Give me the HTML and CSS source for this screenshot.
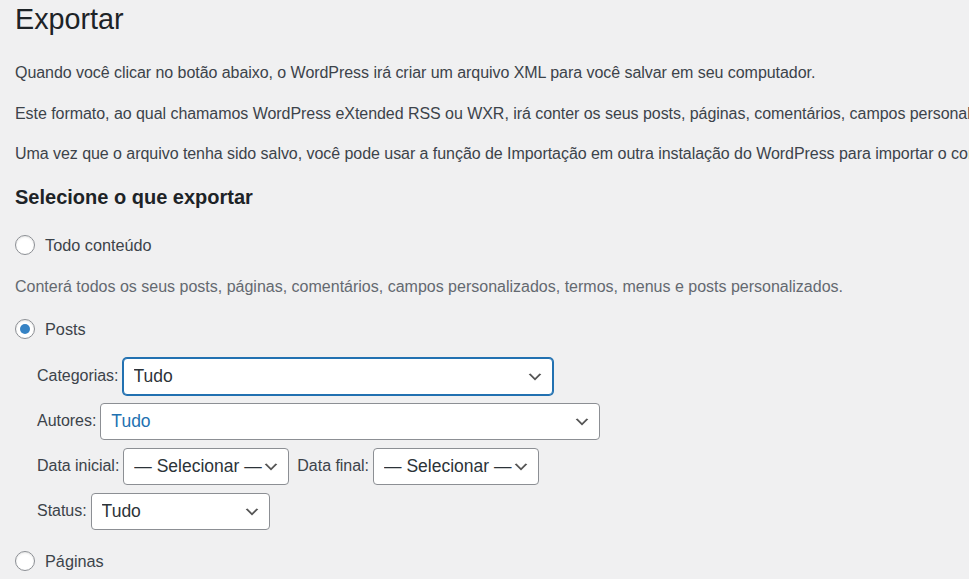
FILE: index.html
```html
<!DOCTYPE html>
<html lang="pt-BR">
<head>
<meta charset="utf-8">
<title>Exportar</title>
<link rel="stylesheet" href="styles.css">
</head>
<body>
<div class="wrap">
  <h1 class="title">Exportar</h1>
  <p class="para">Quando você clicar no botão abaixo, o WordPress irá criar um arquivo XML para você salvar em seu computador.</p>
  <p class="para">Este formato, ao qual chamamos WordPress eXtended RSS ou WXR, irá conter os seus posts, páginas, comentários, campos personalizados, categorias e tags.</p>
  <p class="para">Uma vez que o arquivo tenha sido salvo, você pode usar a função de Importação em outra instalação do WordPress para importar o conteúdo deste site.</p>
  <h2 class="subtitle">Selecione o que exportar</h2>
  <fieldset class="choices">
    <p class="choice choice-first"><label class="radio-label"><input class="radio" type="radio" name="content" value="all"> Todo conteúdo</label></p>
    <p class="description">Conterá todos os seus posts, páginas, comentários, campos personalizados, termos, menus e posts personalizados.</p>
    <p class="choice choice-posts"><label class="radio-label"><input class="radio" type="radio" name="content" value="posts" checked> Posts</label></p>
    <ul class="filters">
      <li class="filter">
        <label class="filter-label" for="cat">Categorias:</label>
        <select id="cat" class="select select-focus select-cat"><option>Tudo</option></select>
      </li>
      <li class="filter">
        <label class="filter-label" for="aut">Autores:</label>
        <select id="aut" class="select select-hover select-aut"><option>Tudo</option></select>
      </li>
      <li class="filter">
        <label class="filter-label" for="ini">Data inicial:</label>
        <select id="ini" class="select select-date"><option>— Selecionar —</option></select>
        <label class="filter-label label-gap" for="fin">Data final:</label>
        <select id="fin" class="select select-date"><option>— Selecionar —</option></select>
      </li>
      <li class="filter">
        <label class="filter-label" for="st">Status:</label>
        <select id="st" class="select select-status"><option>Tudo</option></select>
      </li>
    </ul>
    <p class="choice choice-last"><label class="radio-label"><input class="radio" type="radio" name="content" value="pages"> Páginas</label></p>
  </fieldset>
</div>
</body>
</html>
```

FILE: styles.css
```css
html, body {
  margin: 0;
  padding: 0;
  background: #f0f0f1;
}
body {
  font-family: "Liberation Sans", Arial, sans-serif;
  color: #3c434a;
  font-size: 16.25px;
  line-height: 1.5;
  overflow: hidden;
  width: 969px;
  height: 579px;
}
.wrap {
  padding: 0 0 0 15px;
  white-space: nowrap;
}
.title {
  margin: 0;
  padding: 1px 0 0;
  font-size: 28.75px;
  font-weight: 400;
  line-height: 37px;
  color: #1d2327;
}
.para {
  margin: 0;
  padding-top: 16px;
  line-height: 24.5px;
  font-size: 16px;
  letter-spacing: -0.05px;
}
.title + .para {
  padding-top: 23px;
}
.subtitle {
  margin: 0;
  padding-top: 17px;
  font-size: 20px;
  font-weight: 600;
  line-height: 26px;
  color: #1d2327;
}
.choices {
  margin: 0;
  padding: 0;
  border: 0;
}
.choice {
  margin: 0;
  line-height: 24px;
}
.choice-first {
  padding-top: 23px;
}
.description {
  margin: 0;
  padding-top: 14px;
  line-height: 24px;
  color: #646970;
  font-size: 16px;
}
.choice-posts {
  padding-top: 17px;
}
.radio-label {
  display: inline-flex;
  align-items: center;
}
.radio {
  appearance: none;
  -webkit-appearance: none;
  width: 20px;
  height: 20px;
  margin: 0 10px 0 0;
  border: 1px solid #8c8f94;
  border-radius: 50%;
  background: #fff;
  box-sizing: border-box;
  display: inline-flex;
  align-items: center;
  justify-content: center;
  box-shadow: inset 0 1px 2px rgba(0,0,0,0.1);
}
.radio:checked::before {
  content: "";
  width: 10px;
  height: 10px;
  border-radius: 50%;
  background: #3582c4;
}
.filters {
  list-style: none;
  margin: 0;
  padding: 17px 0 0 22px;
}
.filter {
  display: flex;
  align-items: center;
  height: 37px;
  margin-bottom: 8px;
}
.filter:last-child {
  margin-bottom: 0;
}
.choice-last {
  padding-top: 19px;
}
.filter-label {
  margin-right: 4px;
  font-size: 16px;
  letter-spacing: -0.03px;
}
.label-gap {
  margin-left: 8px;
}
.select {
  appearance: none;
  -webkit-appearance: none;
  box-sizing: border-box;
  height: 37px;
  font-family: inherit;
  font-size: 17.5px;
  line-height: 35px;
  color: #2c3338;
  border: 1px solid #8c8f94;
  border-radius: 4px;
  padding: 0 30px 0 10px;
  background: #fff url("data:image/svg+xml;charset=US-ASCII,%3Csvg%20width%3D%2220%22%20height%3D%2220%22%20xmlns%3D%22http%3A%2F%2Fwww.w3.org%2F2000%2Fsvg%22%3E%3Cpath%20d%3D%22M5%206l5%205%205-5%202%201-7%207-7-7%202-1z%22%20fill%3D%22%23555%22%2F%3E%3C%2Fsvg%3E") no-repeat right 8px top 55%;
  background-size: 18px 18px;
}
.select-focus {
  border-color: #2271b1;
  box-shadow: 0 0 0 1px #2271b1;
}
.select-hover {
  color: #2271b1;
}
.select-cat {
  width: 430px;
}
.select-aut {
  width: 500px;
}
.select-date {
  width: 166px;
  padding-right: 24px;
}
.select-status {
  width: 179px;
}
```
